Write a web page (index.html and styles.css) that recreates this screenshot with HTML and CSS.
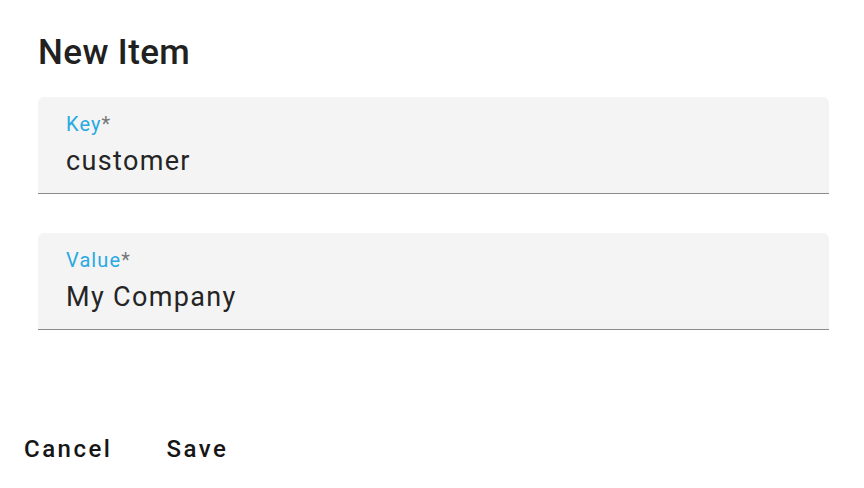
FILE: index.html
```html
<!DOCTYPE html>
<html>
<head>
<meta charset="utf-8">
<link rel="stylesheet" href="styles.css">
</head>
<body>
<div class="dialog">
  <h2 class="title">New Item</h2>
  <div class="content">
    <div class="field">
      <div class="label"><span class="label-text">Key</span><span class="req">*</span></div>
      <div class="value">customer</div>
    </div>
    <div class="field">
      <div class="label"><span class="label-text">Value</span><span class="req">*</span></div>
      <div class="value">My Company</div>
    </div>
  </div>
  <div class="actions">
    <button class="btn">Cancel</button>
    <button class="btn">Save</button>
  </div>
</div>
</body>
</html>
```
FILE: styles.css
```css
html, body {
  margin: 0;
  padding: 0;
  background: #ffffff;
}
body {
  font-family: Roboto, "Noto Sans", sans-serif;
  color: #212121;
}
.dialog {
  width: 864px;
  height: 488px;
  display: flex;
  flex-direction: column;
}
.title {
  margin: 0;
  padding: 33px 0 0 38px;
  font-size: 35px;
  line-height: 40px;
  font-weight: 500;
  letter-spacing: 0.4px;
  color: #212121;
}
.content {
  padding: 24px 35px 0 38px;
  display: flex;
  flex-direction: column;
  gap: 39px;
}
.field {
  background: #f4f4f4;
  border-radius: 6px 6px 0 0;
  border-bottom: 1px solid #8c8c8c;
  padding: 15px 28px 16px 28px;
  height: 65px;
}
.label {
  font-size: 20px;
  line-height: 24px;
  letter-spacing: 1.1px;
}
.label-text {
  color: #29a9e1;
}
.req {
  color: #777777;
}
.value {
  margin-top: 9px;
  font-size: 27px;
  line-height: 32px;
  letter-spacing: 1.35px;
  color: #252525;
}
.actions {
  display: flex;
  gap: 26px;
  padding: 95px 0 0 10px;
}
.btn {
  background: none;
  border: none;
  padding: 10px 14px;
  font-family: Roboto, sans-serif;
  font-size: 24px;
  line-height: 28px;
  font-weight: 500;
  letter-spacing: 2.5px;
  color: #161616;
}
```
